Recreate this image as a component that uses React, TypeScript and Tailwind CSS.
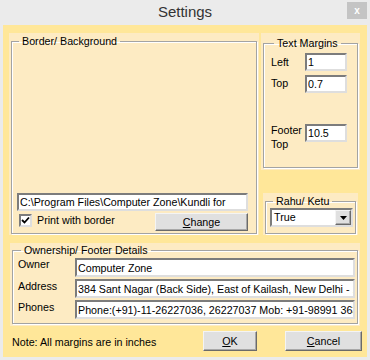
import React from "react";

const sunken =
  "border-2 border-t-[#7c7c7c] border-l-[#7c7c7c] border-r-[#dedede] border-b-[#dedede] bg-white";
const raised =
  "border border-t-[#f4f4f4] border-l-[#f4f4f4] border-r-[#6a6a6a] border-b-[#6a6a6a] bg-[#e0e0e0] shadow-[inset_-1px_-1px_0_#a8a8a8]";
const frame = "border border-[#a3a3a3] shadow-[1px_1px_0_#fff,inset_1px_1px_0_#fff]";

const Field: React.FC<{ value: string; className?: string }> = ({ value, className }) => (
  <input
    readOnly
    defaultValue={value}
    className={`${sunken} ${className ?? ""} pl-[1px] outline-none text-black leading-none`}
  />
);

const Btn: React.FC<{ className?: string; children: React.ReactNode }> = ({ className, children }) => (
  <button className={`${raised} ${className ?? ""} flex items-center justify-center text-black`}>
    {children}
  </button>
);

export default function App() {
  return (
    <div className="w-[370px] h-[360px] bg-[#ebebeb] flex flex-col font-['Liberation_Sans',Arial,sans-serif] text-[10.7px] text-black">
      {/* title bar */}
      <div className="h-[25px] grid grid-cols-[1fr_auto_1fr]">
        <div />
        <div className="text-[15px] text-[#333] leading-[24px]">Settings</div>
        <div className="flex justify-end items-start pt-[2px] pr-[3px]">
          <div className="w-[20px] h-[17px] bg-[#c4c4c4] text-white text-[10px] font-bold flex items-center justify-center leading-none">
            x
          </div>
        </div>
      </div>

      <div className="flex-1 mx-[3px] mb-[3px] bg-[#ffe799] pt-[8px] pl-[6px] flex flex-col">
        <div className="flex">
          {/* Border / Background */}
          <div className="w-[250px] h-[202px] bg-[#fdebc3] px-[2px] pt-[1px] pb-[1px] flex">
            <fieldset className={`${frame} flex-1 flex flex-col justify-end pl-[5px] pr-[8px] pb-[2px]`}>
              <legend className="ml-[2px] px-[3px] leading-[14px]">Border/ Background</legend>
              <Field value="C:\Program Files\Computer Zone\Kundli for" className="w-[231px] h-[18px]" />
              <div className="flex justify-between items-start">
                <div className="flex items-center mt-[1px] ml-[2px]">
                  <span className={`${sunken} w-[13px] h-[13px] flex items-center justify-center`}>
                    <svg width="9" height="9" viewBox="0 0 9 9">
                      <path d="M1 4 L3.5 6.5 L8 1.5" stroke="#000" strokeWidth="1.8" fill="none" />
                    </svg>
                  </span>
                  <span className="ml-[5px]">Print with border</span>
                </div>
                <Btn className="w-[93px] h-[18px] mt-[2px]">
                  <span>
                    <span className="underline">C</span>hange
                  </span>
                </Btn>
              </div>
            </fieldset>
          </div>

          {/* right column */}
          <div className="ml-[2px] w-[99px] flex flex-col">
            <div className="h-[137px] bg-[#fdebc3] px-[2px] pt-[3px] pb-[2px] flex">
              <fieldset className={`${frame} flex-1 flex flex-col pl-[7px]`}>
                <legend className="ml-[3px] px-[3px] leading-[14px]">Text Margins</legend>
                <div className="flex items-start mt-[3px]">
                  <span className="w-[34px] pt-[2px] leading-[14px]">Left</span>
                  <Field value="1" className="w-[42px] h-[18px]" />
                </div>
                <div className="flex items-start mt-[4px]">
                  <span className="w-[34px] pt-[1px] leading-[14px]">Top</span>
                  <Field value="0.7" className="w-[42px] h-[18px]" />
                </div>
                <div className="flex items-start mt-[31px]">
                  <span className="w-[34px] -mt-[1px] leading-[14px]">
                    Footer
                    <br />
                    Top
                  </span>
                  <Field value="10.5" className="w-[42px] h-[18px]" />
                </div>
              </fieldset>
            </div>

            <div className="mt-[23px] ml-[2px] w-[95px] h-[42px] bg-[#fdebc3] px-[2px] pt-[1px] pb-[1px] flex">
              <fieldset className={`${frame} flex-1 pl-[4px]`}>
                <legend className="ml-[3px] px-[3px] leading-[14px]">Rahu/ Ketu</legend>
                <div className={`${sunken} w-[83px] h-[19px] flex items-center justify-between`}>
                  <span className="pl-[2px]">True</span>
                  <span className={`${raised} w-[16px] h-[15px] flex items-center justify-center`}>
                    <svg width="7" height="4" viewBox="0 0 7 4">
                      <path d="M0 0 H7 L3.5 4 Z" fill="#000" />
                    </svg>
                  </span>
                </div>
              </fieldset>
            </div>
          </div>
        </div>

        {/* Ownership */}
        <div className="mt-[8px] ml-[1px] w-[350px] h-[83px] bg-[#fdebc3] px-[2px] pb-[2px] flex">
          <fieldset className={`${frame} flex-1 pl-[5px] pr-[1px]`}>
            <legend className="ml-[3px] px-[3px] leading-[14px]">Ownership/ Footer Details</legend>
            <div className="grid grid-cols-[57px_280px] gap-y-[2px] mt-[1px]">
              <span className="leading-[12px]">Owner</span>
              <Field value="Computer Zone" className="w-[280px] h-[19px]" />
              <span className="leading-[12px] pt-[1px]">Address</span>
              <Field value="384 Sant Nagar (Back Side), East of Kailash, New Delhi - 110065" className="w-[280px] h-[19px]" />
              <span className="leading-[12px] pt-[1px]">Phones</span>
              <Field value="Phone:(+91)-11-26227036, 26227037 Mob: +91-98991 36360" className="w-[280px] h-[19px]" />
            </div>
          </fieldset>
        </div>

        {/* footer */}
        <div className="flex items-start pr-[5px] mt-[5px]">
          <span className="ml-[3px] mt-[4px] flex-1 leading-[14px]">Note: All margins are in inches</span>
          <Btn className="w-[54px] h-[20px]">
            <span>
              <span className="underline">O</span>K
            </span>
          </Btn>
          <Btn className="w-[77px] h-[20px] ml-[28px]">
            <span>
              <span className="underline">C</span>ancel
            </span>
          </Btn>
        </div>
      </div>
    </div>
  );
}
